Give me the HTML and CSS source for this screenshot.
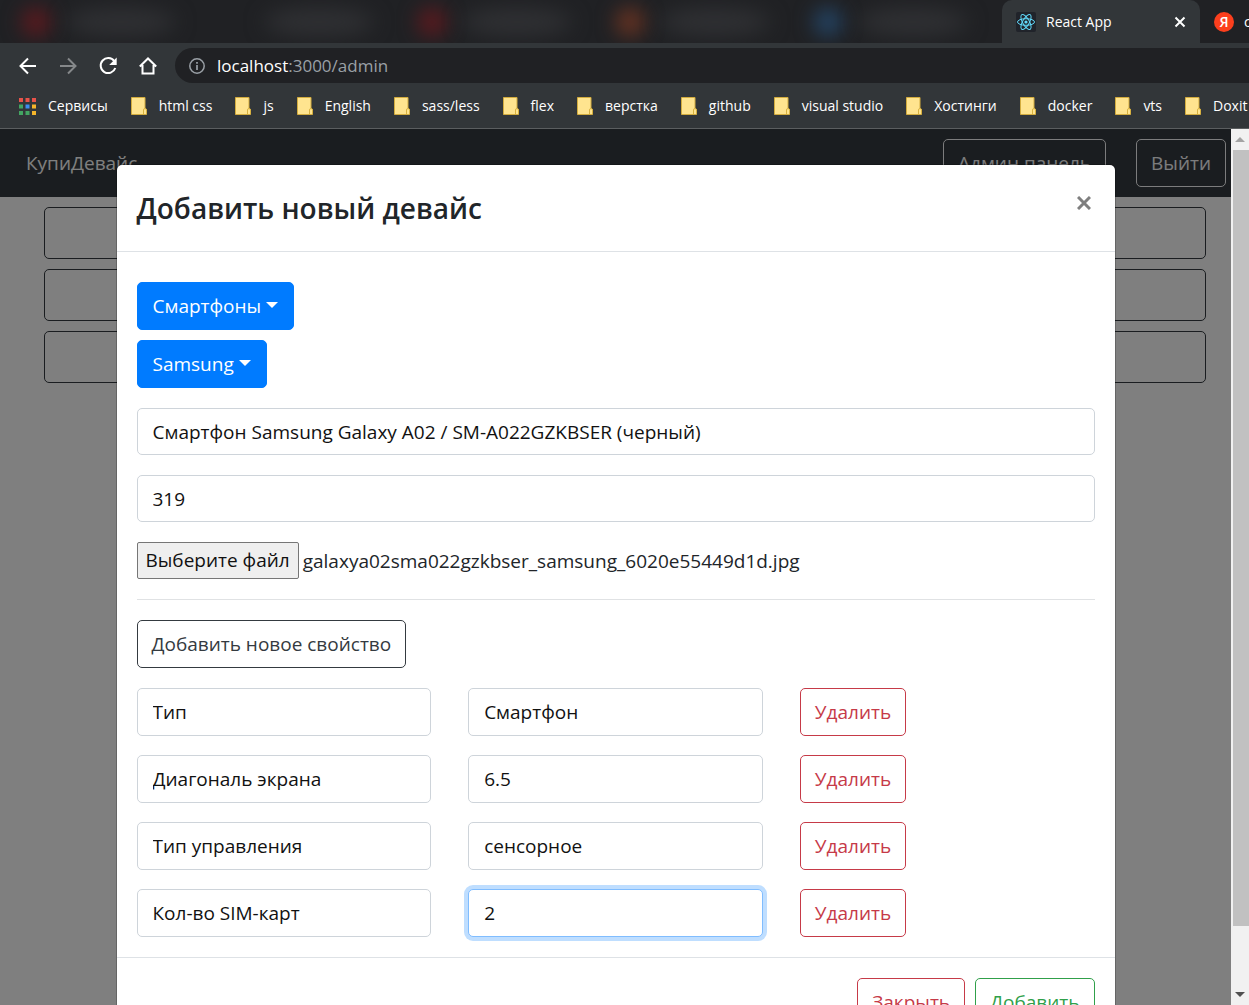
FILE: index.html
```html
<!DOCTYPE html>
<html lang="ru">
<head>
<meta charset="utf-8">
<title>React App</title>
<link rel="stylesheet" href="styles.css">
</head>
<body>
<svg class="defs" width="0" height="0" aria-hidden="true">
  <symbol id="folder" viewBox="0 0 16 18">
    <path d="M.5.5h13.500v11l1.500 1v5H.5z" fill="#ffe48f" stroke="#d3ac3e"/>
    <path d="M12.500 17v-4a1.500 1.500 0 0 1 3 0v4" fill="#ffe48f" stroke="#d8b13f"/>
  </symbol>
</svg>

<header class="browser">
  <div class="tabs">
    <div class="tab-blur red"></div>
    <div class="tab-blur"></div>
    <div class="tab-blur red"></div>
    <div class="tab-blur orange"></div>
    <div class="tab-blur blue"></div>
    <div class="tab-active">
      <svg class="tab-icon" viewBox="0 0 20 20" aria-hidden="true">
        <rect width="20" height="20" rx="2" fill="#20232a"/>
        <g fill="none" stroke="#61dafb" stroke-width="1">
          <ellipse cx="10" cy="10" rx="8.500" ry="3.300"/>
          <ellipse cx="10" cy="10" rx="8.500" ry="3.300" transform="rotate(60 10 10)"/>
          <ellipse cx="10" cy="10" rx="8.500" ry="3.300" transform="rotate(120 10 10)"/>
        </g>
        <circle cx="10" cy="10" r="1.600" fill="#61dafb"/>
      </svg>
      <span class="tab-title">React App</span>
      <button class="tab-close" type="button" aria-label="Закрыть вкладку">
        <svg viewBox="0 0 12 12" width="12" height="12"><path d="M1.500 1.500l9 9M10.500 1.500l-9 9" stroke="#fff" stroke-width="2"/></svg>
      </button>
    </div>
    <div class="tab-next">
      <span class="yandex">Я</span>
      <span>с</span>
    </div>
  </div>

  <div class="toolbar">
    <div class="navs">
      <button class="nav" type="button" aria-label="Назад">
        <svg viewBox="0 0 20 20"><path d="M18 10H3M10 2.500L2.500 10l7.500 7.500" fill="none" stroke="#fff" stroke-width="2"/></svg>
      </button>
      <button class="nav" type="button" aria-label="Вперёд">
        <svg viewBox="0 0 20 20"><path d="M2 10h15M10 2.500l7.500 7.500-7.500 7.500" fill="none" stroke="#85888a" stroke-width="2"/></svg>
      </button>
      <button class="nav" type="button" aria-label="Обновить">
        <svg viewBox="0 0 20 20"><path d="M16.300 5.200A7.500 7.500 0 1 0 17.300 12" fill="none" stroke="#fff" stroke-width="2"/><path d="M18.700 1.500v7.500h-7.500z" fill="#fff"/></svg>
      </button>
      <button class="nav" type="button" aria-label="Домой">
        <svg viewBox="0 0 20 20"><path d="M1.800 10.500L10 2.500l8.200 8M4.500 9v8.500h11V9" fill="none" stroke="#fff" stroke-width="2"/></svg>
      </button>
    </div>
    <div class="address">
      <svg class="info" viewBox="0 0 16 16" aria-hidden="true"><circle cx="8" cy="8" r="7.200" fill="none" stroke="#9aa0a6" stroke-width="1.500"/><path d="M8 7v5M8 4v1.700" stroke="#9aa0a6" stroke-width="1.700"/></svg>
      <span>localhost<span class="path">:3000/admin</span></span>
    </div>
  </div>

  <nav class="bookmarks">
    <a class="bookmark" href="#">
      <svg class="apps" viewBox="0 0 17 17" aria-hidden="true">
        <path d="M0 0h4v4H0zM6.500 0h4v4h-4zM13 0h4v4h-4z" fill="#e8534a"/>
        <path d="M0 6.500h4v4H0zM0 13h4v4H0zM6.500 13h4v4h-4z" fill="#43a562"/>
        <path d="M6.500 6.500h4v4h-4z" fill="#3c8df0"/>
        <path d="M13 6.500h4v4h-4zM13 13h4v4h-4z" fill="#f5b52b"/>
      </svg>Сервисы</a>
    <a class="bookmark" href="#"><svg class="folder"><use href="#folder"/></svg>html css</a>
    <a class="bookmark" href="#"><svg class="folder"><use href="#folder"/></svg>js</a>
    <a class="bookmark" href="#"><svg class="folder"><use href="#folder"/></svg>English</a>
    <a class="bookmark" href="#"><svg class="folder"><use href="#folder"/></svg>sass/less</a>
    <a class="bookmark" href="#"><svg class="folder"><use href="#folder"/></svg>flex</a>
    <a class="bookmark" href="#"><svg class="folder"><use href="#folder"/></svg>верстка</a>
    <a class="bookmark" href="#"><svg class="folder"><use href="#folder"/></svg>github</a>
    <a class="bookmark" href="#"><svg class="folder"><use href="#folder"/></svg>visual studio</a>
    <a class="bookmark" href="#"><svg class="folder"><use href="#folder"/></svg>Хостинги</a>
    <a class="bookmark" href="#"><svg class="folder"><use href="#folder"/></svg>docker</a>
    <a class="bookmark" href="#"><svg class="folder"><use href="#folder"/></svg>vts</a>
    <a class="bookmark" href="#"><svg class="folder"><use href="#folder"/></svg>Doxit</a>
  </nav>
</header>

<main class="viewport">
  <div class="navbar">
    <a class="brand" href="#">КупиДевайс</a>
    <div class="navbar-actions">
      <button class="btn btn-light" type="button">Админ панель</button>
      <button class="btn btn-light" type="button">Выйти</button>
    </div>
  </div>
  <div class="container">
    <button class="btn-wide" type="button" aria-label="Добавить тип"></button>
    <button class="btn-wide" type="button" aria-label="Добавить бренд"></button>
    <button class="btn-wide" type="button" aria-label="Добавить устройство"></button>
  </div>

  <div class="backdrop">
    <section class="modal" role="dialog" aria-labelledby="modal-title">
      <div class="modal-header">
        <h2 id="modal-title">Добавить новый девайс</h2>
        <button class="close" type="button" aria-label="Закрыть">
          <svg viewBox="0 0 14 14" width="14" height="14"><path d="M1 1l12 12M13 1L1 13" stroke="#7f7f7f" stroke-width="3"/></svg>
        </button>
      </div>
      <form class="modal-body">
        <div class="dropdowns">
          <button class="btn btn-primary" type="button">Смартфоны<span class="caret"></span></button>
          <button class="btn btn-primary" type="button">Samsung<span class="caret"></span></button>
        </div>
        <input class="control" type="text" aria-label="Название устройства" value="Смартфон Samsung Galaxy A02 / SM-A022GZKBSER (черный)">
        <input class="control" type="text" aria-label="Стоимость устройства" value="319">
        <div class="file">
          <input class="file-input" type="file" id="file">
          <label class="file-button" for="file">Выберите файл</label>
          <span>galaxya02sma022gzkbser_samsung_6020e55449d1d.jpg</span>
        </div>
        <hr>
        <button class="btn btn-dark" type="button">Добавить новое свойство</button>
        <div class="properties">
          <input class="control" type="text" aria-label="Название свойства" value="Тип">
          <input class="control" type="text" aria-label="Описание свойства" value="Смартфон">
          <button class="btn btn-danger" type="button">Удалить</button>
          <input class="control" type="text" aria-label="Название свойства" value="Диагональ экрана">
          <input class="control" type="text" aria-label="Описание свойства" value="6.5">
          <button class="btn btn-danger" type="button">Удалить</button>
          <input class="control" type="text" aria-label="Название свойства" value="Тип управления">
          <input class="control" type="text" aria-label="Описание свойства" value="сенсорное">
          <button class="btn btn-danger" type="button">Удалить</button>
          <input class="control" type="text" aria-label="Название свойства" value="Кол-во SIM-карт">
          <input class="control focused" type="text" aria-label="Описание свойства" value="2">
          <button class="btn btn-danger" type="button">Удалить</button>
        </div>
      </form>
      <div class="modal-footer">
        <button class="btn btn-danger" type="button">Закрыть</button>
        <button class="btn btn-success" type="button">Добавить</button>
      </div>
    </section>
  </div>

  <div class="scrollbar" aria-hidden="true">
    <span class="arrow up"></span>
    <div class="track"><div class="thumb"></div></div>
    <span class="arrow down"></span>
  </div>
</main>
</body>
</html>
```
FILE: styles.css
```css
* {
  box-sizing: border-box;
}

body {
  display: flex;
  flex-direction: column;
  height: 100vh;
  margin: 0;
  overflow: hidden;
  font-family: "Open Sans", "Noto Sans", sans-serif;
  font-size: 19px;
  line-height: 28px;
  color: #212529;
  background: #fff;
}

button,
input {
  margin: 0;
  font: inherit;
}

.defs {
  position: absolute;
}

/* Browser window */
.browser {
  flex: none;
  font-size: 14px;
  color: #fff;
  background: #323639;
  border-bottom: 1px solid #5b5e60;
}

.tabs {
  display: flex;
  height: 43px;
  padding-left: 12px;
  overflow: hidden;
  background: #202124;
}

.tab-blur {
  display: flex;
  flex: none;
  gap: 16px;
  align-items: center;
  width: 198px;
  padding-left: 10px;
}

.tab-blur::before,
.tab-blur::after {
  content: "";
  width: 28px;
  height: 28px;
  border-radius: 50%;
  filter: blur(10px);
}

.tab-blur::after {
  width: 110px;
  background: #2f3033;
}

.tab-blur.red::before {
  background: #60191e;
}

.tab-blur.orange::before {
  background: #6c3422;
}

.tab-blur.blue::before {
  background: #244668;
}

.tab-active {
  display: flex;
  flex: none;
  align-items: center;
  width: 198px;
  padding: 0 14px;
  background: #323639;
  border-radius: 10px 10px 0 0;
}

.tab-icon {
  width: 20px;
  height: 20px;
  margin-right: 10px;
}

.tab-title {
  flex: 1;
}

.tab-close {
  display: flex;
  padding: 0;
  background: none;
  border: 0;
}

.tab-next {
  display: flex;
  flex: 1;
  gap: 10px;
  align-items: center;
  padding-left: 14px;
  overflow: hidden;
  background: #202124;
}

.yandex {
  flex: none;
  width: 20px;
  height: 20px;
  font-weight: 600;
  line-height: 20px;
  text-align: center;
  background: #fc3f1d;
  border-radius: 50%;
}

.toolbar {
  display: flex;
  gap: 17px;
  align-items: center;
  height: 45px;
  padding-left: 18px;
}

.navs {
  display: flex;
  gap: 20px;
}

.nav {
  flex: none;
  width: 20px;
  height: 20px;
  padding: 0;
  background: none;
  border: 0;
}

.nav svg {
  display: block;
}

.address {
  display: flex;
  flex: 1;
  gap: 12px;
  align-items: center;
  height: 35px;
  padding-left: 14px;
  font-size: 17px;
  background: #202124;
  border-radius: 18px 0 0 18px;
}

.info {
  width: 16px;
  height: 16px;
}

.path {
  color: #9aa0a6;
}

.bookmarks {
  display: flex;
  gap: 23px;
  align-items: center;
  height: 40px;
  padding: 0 0 4px 19px;
  overflow: hidden;
}

.bookmark {
  display: flex;
  flex: none;
  gap: 12px;
  align-items: center;
  color: #fff;
  text-decoration: none;
}

.apps {
  width: 17px;
  height: 17px;
}

.folder {
  width: 16px;
  height: 18px;
}

/* Page under the dialog */
.viewport {
  position: relative;
  flex: 1;
  min-height: 0;
  overflow: hidden;
}

.navbar {
  display: flex;
  align-items: center;
  justify-content: space-between;
  padding: 10px 23px 10px 26px;
  background: #343a40;
}

.brand {
  color: #fff;
  text-decoration: none;
}

.navbar-actions {
  display: flex;
  gap: 30px;
}

.container {
  display: grid;
  gap: 10px;
  max-width: 1162px;
  margin: 10px auto;
}

.btn-wide {
  height: 52px;
  background: none;
  border: 1px solid #343a40;
  border-radius: 5px;
}

/* Buttons and fields */
.btn {
  height: 48px;
  padding: 0 14px;
  white-space: nowrap;
  background: none;
  border: 1px solid;
  border-radius: 5px;
}

.btn-light {
  color: #f8f9fa;
}

.btn-primary {
  padding: 0 15px;
  color: #fff;
  background: #007bff;
  border-color: #007bff;
}

.btn-dark {
  color: #343a40;
}

.btn-danger {
  justify-self: start;
  color: #c63a48;
}

.btn-success {
  color: #30a04a;
}

.caret {
  display: inline-block;
  margin-left: 5px;
  vertical-align: 5px;
  border: 6px solid transparent;
  border-top-color: #fff;
  border-bottom: 0;
}

.control {
  width: 100%;
  height: 47px;
  padding: 0 15px;
  color: #111;
  background: #fff;
  border: 1px solid #ced4da;
  border-radius: 5px;
}

.focused {
  border-color: #80bdff;
  box-shadow: 0 0 0 4px #bfdeff;
}

/* Dialog */
.backdrop {
  position: absolute;
  inset: 0 18px 0 0;
  padding: 35px 20px 0;
  overflow: hidden;
  background: rgba(0, 0, 0, 0.5);
}

.modal {
  max-width: 1000px;
  margin: 0 auto;
  background: #fff;
  background-clip: padding-box;
  border: 1px solid rgba(0, 0, 0, 0.2);
  border-radius: 6px;
}

.modal-header {
  display: flex;
  align-items: flex-start;
  justify-content: space-between;
  padding: 20px;
  border-bottom: 1px solid #dee2e6;
}

.modal-header h2 {
  margin: 0;
  font-size: 28px;
  font-weight: 600;
  line-height: 46px;
}

.close {
  display: flex;
  padding: 11px 4px;
  background: none;
  border: 0;
}

.modal-body {
  display: flex;
  flex-direction: column;
  gap: 20px;
  align-items: flex-start;
  padding: 30px 20px 20px;
}

.dropdowns {
  display: flex;
  flex-direction: column;
  gap: 10px;
  align-items: flex-start;
}

.file {
  display: flex;
  gap: 4px;
  align-items: center;
}

.file-input {
  position: absolute;
  width: 1px;
  height: 1px;
  opacity: 0;
}

.file-button {
  height: 37px;
  padding: 0 8px;
  line-height: 35px;
  color: #111;
  background: #efefef;
  border: 1px solid #767676;
  border-radius: 2px;
}

hr {
  width: 100%;
  margin: 0;
  border: 0;
  border-top: 1px solid #e0e2e4;
}

.properties {
  display: grid;
  grid-template-columns: repeat(3, 1fr);
  gap: 19px 37px;
  width: 100%;
}

.properties .control {
  height: 48px;
}

.modal-footer {
  display: flex;
  gap: 10px;
  justify-content: flex-end;
  padding: 20px;
  border-top: 1px solid #dee2e6;
}

/* Scrollbar */
.scrollbar {
  position: absolute;
  inset: 0 0 0 auto;
  display: flex;
  flex-direction: column;
  align-items: center;
  width: 18px;
  background: #f1f1f1;
}

.arrow {
  display: flex;
  flex: none;
  align-items: center;
  justify-content: center;
  width: 100%;
  height: 21px;
}

.arrow::before {
  content: "";
  border: 5px solid transparent;
}

.up::before {
  border-top: 0;
  border-bottom-color: #a3a3a3;
}

.down::before {
  border-top-color: #505050;
  border-bottom: 0;
}

.track {
  display: flex;
  flex: 1;
  flex-direction: column;
  width: 100%;
  padding-left: 2px;
}

.thumb {
  height: 93%;
  background: #c1c1c1;
}
```
